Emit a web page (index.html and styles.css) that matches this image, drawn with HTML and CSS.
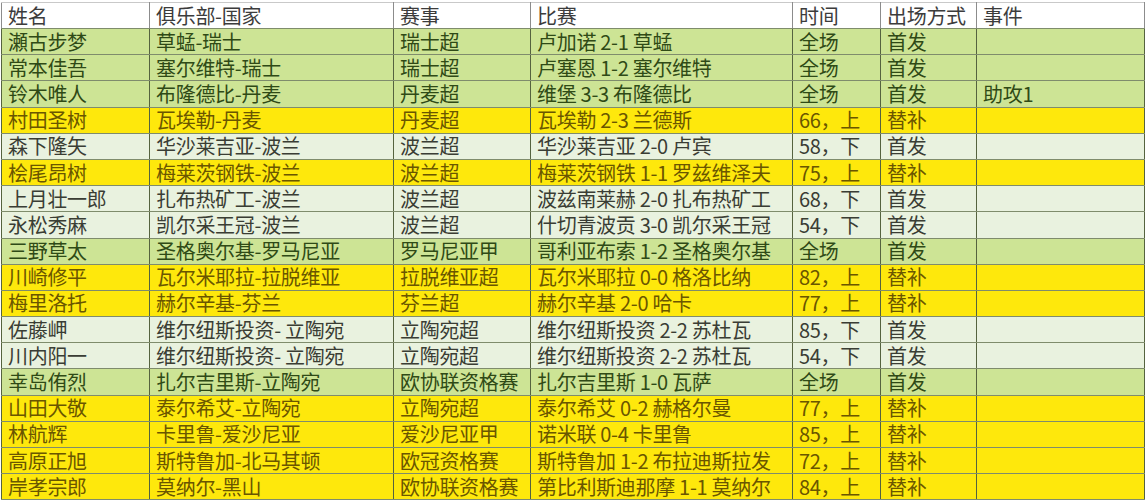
FILE: index.html
```html
<!DOCTYPE html>
<html lang="zh-CN">
<head>
<meta charset="utf-8">
<title>球员出场统计</title>
<link rel="stylesheet" href="styles.css">
</head>
<body>
<table class="sheet">
  <colgroup>
    <col class="c1"><col class="c2"><col class="c3"><col class="c4"><col class="c5"><col class="c6"><col class="c7">
  </colgroup>
  <thead>
    <tr class="head"><th>姓名</th><th>俱乐部-国家</th><th>赛事</th><th>比赛</th><th>时间</th><th>出场方式</th><th>事件</th></tr>
  </thead>
  <tbody>
    <tr class="g"><td>瀬古步梦</td><td>草蜢-瑞士</td><td>瑞士超</td><td>卢加诺 2-1 草蜢</td><td>全场</td><td>首发</td><td></td></tr>
    <tr class="g"><td>常本佳吾</td><td>塞尔维特-瑞士</td><td>瑞士超</td><td>卢塞恩 1-2 塞尔维特</td><td>全场</td><td>首发</td><td></td></tr>
    <tr class="g"><td>铃木唯人</td><td>布隆德比-丹麦</td><td>丹麦超</td><td>维堡 3-3 布隆德比</td><td>全场</td><td>首发</td><td>助攻1</td></tr>
    <tr class="y"><td>村田圣树</td><td>瓦埃勒-丹麦</td><td>丹麦超</td><td>瓦埃勒 2-3 兰德斯</td><td>66，上</td><td>替补</td><td></td></tr>
    <tr class="l"><td>森下隆矢</td><td>华沙莱吉亚-波兰</td><td>波兰超</td><td>华沙莱吉亚 2-0 卢宾</td><td>58，下</td><td>首发</td><td></td></tr>
    <tr class="y"><td>桧尾昂树</td><td>梅莱茨钢铁-波兰</td><td>波兰超</td><td>梅莱茨钢铁 1-1 罗兹维泽夫</td><td>75，上</td><td>替补</td><td></td></tr>
    <tr class="l"><td>上月壮一郎</td><td>扎布热矿工-波兰</td><td>波兰超</td><td>波兹南莱赫 2-0 扎布热矿工</td><td>68，下</td><td>首发</td><td></td></tr>
    <tr class="l"><td>永松秀麻</td><td>凯尔采王冠-波兰</td><td>波兰超</td><td>什切青波贡 3-0 凯尔采王冠</td><td>54，下</td><td>首发</td><td></td></tr>
    <tr class="g"><td>三野草太</td><td>圣格奥尔基-罗马尼亚</td><td>罗马尼亚甲</td><td>哥利亚布索 1-2 圣格奥尔基</td><td>全场</td><td>首发</td><td></td></tr>
    <tr class="y"><td>川崎修平</td><td>瓦尔米耶拉-拉脱维亚</td><td>拉脱维亚超</td><td>瓦尔米耶拉 0-0 格洛比纳</td><td>82，上</td><td>替补</td><td></td></tr>
    <tr class="y"><td>梅里洛托</td><td>赫尔辛基-芬兰</td><td>芬兰超</td><td>赫尔辛基 2-0 哈卡</td><td>77，上</td><td>替补</td><td></td></tr>
    <tr class="l"><td>佐藤岬</td><td>维尔纽斯投资- 立陶宛</td><td>立陶宛超</td><td>维尔纽斯投资 2-2 苏杜瓦</td><td>85，下</td><td>首发</td><td></td></tr>
    <tr class="l"><td>川内阳一</td><td>维尔纽斯投资- 立陶宛</td><td>立陶宛超</td><td>维尔纽斯投资 2-2 苏杜瓦</td><td>54，下</td><td>首发</td><td></td></tr>
    <tr class="g"><td>幸岛侑烈</td><td>扎尔吉里斯-立陶宛</td><td>欧协联资格赛</td><td>扎尔吉里斯 1-0 瓦萨</td><td>全场</td><td>首发</td><td></td></tr>
    <tr class="y"><td>山田大敬</td><td>泰尔希艾-立陶宛</td><td>立陶宛超</td><td>泰尔希艾 0-2 赫格尔曼</td><td>77，上</td><td>替补</td><td></td></tr>
    <tr class="y"><td>林航辉</td><td>卡里鲁-爱沙尼亚</td><td>爱沙尼亚甲</td><td>诺米联 0-4 卡里鲁</td><td>85，上</td><td>替补</td><td></td></tr>
    <tr class="y"><td>高原正旭</td><td>斯特鲁加-北马其顿</td><td>欧冠资格赛</td><td>斯特鲁加 1-2 布拉迪斯拉发</td><td>72，上</td><td>替补</td><td></td></tr>
    <tr class="y"><td>岸孝宗郎</td><td>莫纳尔-黑山</td><td>欧协联资格赛</td><td>第比利斯迪那摩 1-1 莫纳尔</td><td>84，上</td><td>替补</td><td></td></tr>
  </tbody>
</table>
</body>
</html>
```

FILE: styles.css
```css
html, body {
  margin: 0;
  padding: 0;
  background: #ffffff;
}

body {
  padding: 2px 0 0 1px;
  font-family: "Noto Sans CJK SC", "Noto Sans", "DejaVu Sans", sans-serif;
}

.sheet {
  border-collapse: collapse;
  table-layout: fixed;
  width: 1143px;
}

.c1 { width: 148px; }
.c2 { width: 244px; }
.c3 { width: 137px; }
.c4 { width: 262px; }
.c5 { width: 88px; }
.c6 { width: 96px; }
.c7 { width: 168px; }

.sheet th,
.sheet td {
  height: 26.2px;
  padding: 0 0 0 6px;
  box-sizing: border-box;
  font-size: 20px;
  line-height: 24px;
  letter-spacing: -0.3px;
  font-weight: normal;
  text-align: left;
  white-space: nowrap;
  vertical-align: middle;
  border-top: 1px solid #7f8c6c;
  border-bottom: 1px solid #7f8c6c;
  border-left: 1px solid #55633f;
  border-right: 1px solid #55633f;
}

.head th {
  height: 26px;
  background: #ffffff;
  color: #3c3c3c;
  border-top: 1px solid #c9c9c9;
  border-left: 1px solid #8c8c8c;
  border-right: 1px solid #8c8c8c;
  border-bottom: 1px solid #7f8c6c;
}

.g td {
  background: #cde495;
  color: #2f4a16;
}

.l td {
  background: #e9f2df;
  color: #3a3d34;
}

.y td {
  background: #fee80c;
  color: #6a5600;
}
```
